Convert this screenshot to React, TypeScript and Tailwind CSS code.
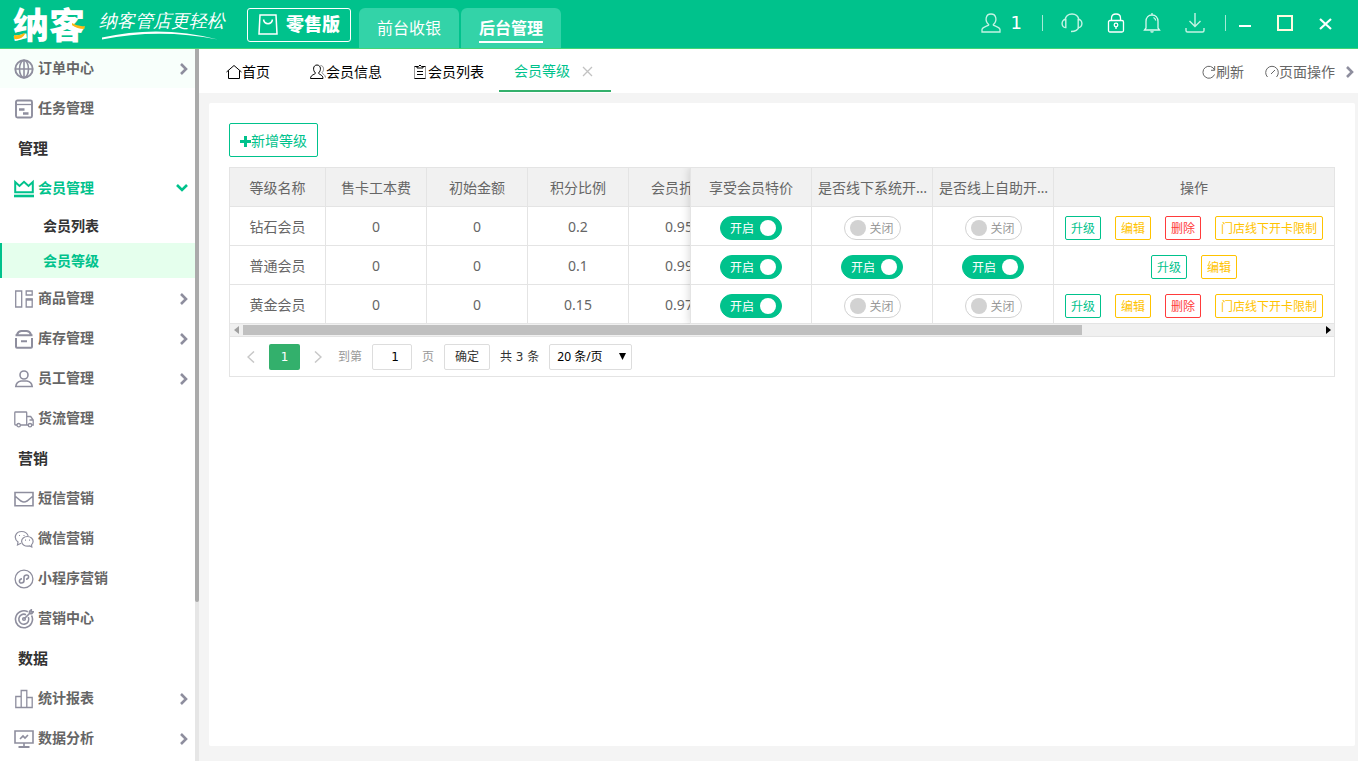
import { useState, type ReactNode } from "react";

type IconName =
  | "globe"
  | "task"
  | "crown"
  | "goods"
  | "stock"
  | "staff"
  | "truck"
  | "mail"
  | "wechat"
  | "mini"
  | "target"
  | "stats"
  | "monitor";

const iconPaths: Record<IconName, ReactNode> = {
  globe: (
    <>
      <circle cx="10" cy="10" r="8.7" strokeWidth="1.9" />
      <ellipse cx="10" cy="10" rx="4.5" ry="8.7" />
      <path d="M1.5 10h17M10 1.5v17" />
    </>
  ),
  task: (
    <>
      <rect x="2" y="1.5" width="16" height="17" rx="1.5" strokeWidth="1.9" />
      <path d="M2 5.500h16" strokeWidth="1.300" />
      <path d="M5 10.500h5.500M9 14.500h5.500" strokeWidth="2.400" />
    </>
  ),
  crown: (
    <>
      <path d="M1.200 3v10.200h17.600V3l-4.300 4L10 2.800 5.500 7z" strokeWidth="2" />
      <path d="M0 17h20" strokeWidth="2.6" />
    </>
  ),
  goods: (
    <>
      <path d="M1.700 2h6v16h-6zM12.200 2h6v4h-6zM12.200 10h6v8h-6z" strokeWidth="1.3" />
      <path d="M12 10.700h6.500" strokeWidth="2" />
    </>
  ),
  stock: (
    <path
      d="M1.500 6.200h17M3 5.500c1-2.500 2.500-3.500 4.500-3.500h5c2 0 3.500 1 4.500 3.500M2 9v8.700q0 1 1 1h14q1 0 1-1V9M7 12.300h6"
      strokeWidth="2"
    />
  ),
  staff: (
    <>
      <circle cx="10" cy="6" r="4" />
      <path d="M1.800 17.500c.4-3.300 2.700-5 5.200-5.500h6c2.500.5 4.800 2.200 5.200 5.500z" />
    </>
  ),
  truck: (
    <>
      <path
        d="M3 16H1.500q-.7 0-.7-.8V3.800q0-.8.700-.8H12q.7 0 .7.800V16H6.500M12.700 7.500h4l2.500 3.500v5h-1.400M12.700 16h1.500M15.500 11h3.700"
        strokeWidth="1.300"
      />
      <circle cx="4.700" cy="16.200" r="1.700" strokeWidth="1.300" />
      <circle cx="16" cy="16.200" r="1.700" strokeWidth="1.300" />
    </>
  ),
  mail: <path d="M1 3.500h18v13.300H1zM1.500 7.500 7 12q3 2 6 0l5.500-4.500" />,
  wechat: (
    <>
      <path d="M7 14.300 3.500 16l.5-3C-1 9 1.500 2.500 7.700 2.500c3.300 0 5.600 2 6.500 4.400M5 6.500h1M9.500 6.500h1" strokeWidth="1.200" />
      <path
        d="M13.300 7.500c3.400 0 5.800 2.200 5.800 4.800 0 1.500-.6 2.700-1.600 3.600l.3 2-2.200-1c-4.500 1-8-1.300-8-4.600 0-2.600 2.400-4.800 5.700-4.800zM11 11.200h1M15 11.200h1"
        strokeWidth="1.200"
      />
    </>
  ),
  mini: (
    <>
      <circle cx="10" cy="10" r="8.900" strokeWidth="1.300" />
      <path d="M8 9.800c-3.300.4-3.300 4.200-.7 4.200 1.600 0 2.700-.9 2.700-2.500V8.500C10 6.900 11.100 6 12.700 6c2.600 0 2.600 3.800-.7 4.200" />
    </>
  ),
  target: (
    <>
      <path d="M17.600 6.500A8.500 8.500 0 1 1 13.800 2.700" />
      <path d="M14.300 8A5 5 0 1 1 12 5.700" />
      <circle cx="10" cy="10" r="1.300" />
      <path d="m10.500 9.500 6-6M15.500 4.500V2.300L17.300.8v2h2l-1.500 1.800z" />
    </>
  ),
  stats: <path d="M1.800 7.500h5.400v11H1.800zM7.200 1.500h5.600v17H7.200zM12.800 8.500h5.400v10h-5.400z" strokeWidth="1.300" />,
  monitor: (
    <>
      <path d="M1 2h18v12H1zM10 14v4" />
      <path d="M4.500 18h11" strokeWidth="2" />
      <path d="m6 10 3-3 2 2 3-3" />
    </>
  ),
};

function NavIcon({ name }: { name: IconName }) {
  return (
    <svg className="size-5 shrink-0" viewBox="0 0 20 20" fill="none" stroke="currentColor" strokeWidth="1.6">
      {iconPaths[name]}
    </svg>
  );
}

function Chevron({ className }: { className?: string }) {
  return (
    <svg className={className} width="8" height="12" viewBox="0 0 8 12" fill="none" stroke="currentColor" strokeWidth="2.6">
      <path d="m1 1 5 5-5 5" />
    </svg>
  );
}

type NavItem = {
  label: string;
  icon?: IconName;
  arrow?: boolean;
  hover?: boolean;
  children?: string[];
};

const navItems: NavItem[] = [
  { label: "订单中心", icon: "globe", arrow: true, hover: true },
  { label: "任务管理", icon: "task" },
  { label: "管理" },
  { label: "会员管理", icon: "crown", children: ["会员列表", "会员等级"] },
  { label: "商品管理", icon: "goods", arrow: true },
  { label: "库存管理", icon: "stock", arrow: true },
  { label: "员工管理", icon: "staff", arrow: true },
  { label: "货流管理", icon: "truck" },
  { label: "营销" },
  { label: "短信营销", icon: "mail" },
  { label: "微信营销", icon: "wechat" },
  { label: "小程序营销", icon: "mini" },
  { label: "营销中心", icon: "target" },
  { label: "数据" },
  { label: "统计报表", icon: "stats", arrow: true },
  { label: "数据分析", icon: "monitor", arrow: true },
];

const levels = [
  { name: "钻石会员", fee: "0", initial: "0", ratio: "0.2", discount: "0.95", special: true, offline: false, online: false, full: true },
  { name: "普通会员", fee: "0", initial: "0", ratio: "0.1", discount: "0.99", special: true, offline: true, online: true, full: false },
  { name: "黄金会员", fee: "0", initial: "0", ratio: "0.15", discount: "0.97", special: true, offline: false, online: false, full: true },
];

function Header() {
  return (
    <header className="relative z-10 flex h-12 shrink-0 items-start bg-[#00c28c] text-white shadow-[0_1px_0_#44d477]">
      <div className="relative ml-[13px] h-12 w-[74px]">
        <span className="text-4xl leading-[52px] font-black whitespace-nowrap">纳客</span>
        <svg className="absolute inset-0" width="74" height="48" viewBox="0 0 74 48" fill="#fdb913">
          <path d="M1 35q6 1 10-2l1 1q-3 6-11 5zM59 23q6 4 13 3l-1 3q-7 0-12-4z" />
        </svg>
      </div>
      <div className="relative ml-3 h-12 w-[128px]">
        <span className="font-serif text-lg leading-[44px] whitespace-nowrap italic">纳客管店更轻松</span>
        <svg className="absolute inset-0" width="128" height="48" viewBox="0 0 128 48" fill="white">
          <path d="M3 37.500q58-13 116 2Q60 28 3 39.500z" />
        </svg>
      </div>
      <button className="mt-2 ml-5 flex h-[34px] w-[104px] items-center justify-center gap-2 rounded-[3px] border border-white pb-0.5 text-lg leading-6 font-black">
        <svg width="20" height="21" viewBox="0 0 20 21" fill="none" stroke="white" strokeWidth="1.500">
          <path d="M2 1h16l1 19H1zM5.500 5.500c1 5.500 8 5.500 9 0" />
        </svg>
        零售版
      </button>
      <nav className="mt-2 ml-2 flex gap-0.5">
        <a href="#cashier" className="h-10 w-[100px] rounded-t-md bg-[#33d3a8] pt-2 text-center text-base leading-6">
          前台收银
        </a>
        <a href="#admin" className="flex h-10 w-[100px] justify-center rounded-t-md bg-[#33d3a8] pt-2">
          <span className="h-[27px] border-b-2 border-white text-base leading-6 font-bold">后台管理</span>
        </a>
      </nav>
      <div className="mt-3 ml-auto flex h-[22px] items-center pr-[26px]">
        <button aria-label="用户" className="flex items-center gap-2.5 font-['DejaVu_Sans'] text-lg">
          <svg width="20" height="20" viewBox="0 0 20 20" fill="none" stroke="#c4f3e4" strokeWidth="1.300">
            <path d="M7.700 11.500C3.500 8 4.500 1 10 1s6.500 7 2.300 10.500c-.8 1.500 6.200 2 6.700 5V19H1v-2.500c.5-3 7.500-3.500 6.700-5z" />
          </svg>
          1
        </button>
        <span className="ml-5 h-4 w-px bg-[#a5ead6]" />
        <button aria-label="客服" className="ml-[18px]">
          <svg width="22" height="20" viewBox="0 0 22 20" fill="none" stroke="#c4f3e4" strokeWidth="1.400">
            <path d="M4 7c1.500-8 12.500-8 14 0M18 14c-1 3-4 4.500-8 4.500" />
            <path d="M4.800 6.500v8C-.3 15 .0 6 4.800 6.500zM17.200 6.500v8c5.100.5 4.800-8.500 0-8z" />
          </svg>
        </button>
        <button aria-label="锁屏" className="ml-6">
          <svg width="18" height="20" viewBox="0 0 18 20" fill="none" stroke="white" strokeWidth="1.300">
            <rect x="1.500" y="7.500" width="15" height="11.500" rx="1.500" />
            <path d="M4.500 7.500V5q0-4 4.500-4t4.500 4v2.500M9 13.500v2.500" />
            <circle cx="9" cy="12" r="1.800" />
          </svg>
        </button>
        <button aria-label="通知" className="ml-[18px]">
          <svg width="18" height="20" viewBox="0 0 18 20" fill="none" stroke="#d8f7ee" strokeWidth="1.300">
            <path d="M3 15V8.500C3 4.500 5.500 2 9 2s6 2.500 6 6.500V15l1.500 2h-15zM9 0v2M7.500 18.500q1.500 1 3 0M10.500 4.500q2 1 2.200 3" />
          </svg>
        </button>
        <button aria-label="下载" className="ml-6">
          <svg width="20" height="20" viewBox="0 0 20 20" fill="none" stroke="#c4f3e4" strokeWidth="1.400">
            <path d="M10 0v13M4.500 8l5.500 5.500L15.500 8M1 15v2.500q0 1.500 1.500 1.500h15q1.500 0 1.500-1.500V15" />
          </svg>
        </button>
        <span className="ml-5 h-4 w-px bg-[#a5ead6]" />
        <button aria-label="最小化" className="ml-[13px]">
          <svg width="12" height="14" viewBox="0 0 12 14" fill="none" stroke="white" strokeWidth="2">
            <path d="M0 10h12" />
          </svg>
        </button>
        <button aria-label="最大化" className="ml-[26px]">
          <svg width="16" height="16" viewBox="0 0 16 16" fill="none" stroke="#fffbe0" strokeWidth="2">
            <rect x="1" y="1" width="14" height="14" />
          </svg>
        </button>
        <button aria-label="关闭窗口" className="ml-[26px]">
          <svg width="13" height="13" viewBox="0 0 13 13" fill="none" stroke="white" strokeWidth="2.200">
            <path d="m1 2 11 10M12 2 1 12" />
          </svg>
        </button>
      </div>
    </header>
  );
}

function Sidebar() {
  return (
    <aside className="flex w-[199px] shrink-0 overflow-hidden bg-white">
      <nav className="min-w-0 flex-1 text-sm font-bold text-[#666]">
        {navItems.map((item) => {
          if (!item.icon) {
            return (
              <h2 key={item.label} className="h-10 pl-[18px] text-[15px] leading-10 font-bold text-[#333]">
                {item.label}
              </h2>
            );
          }
          return (
            <div key={item.label}>
              <a
                href="#nav"
                className={`flex h-10 items-center gap-1 pr-[7px] pl-3.5 ${item.hover ? "bg-[#f8fffb]" : ""} ${
                  item.children ? "text-[#00c28c]" : ""
                }`}
              >
                <span className={`pt-0.5 ${item.children ? "" : "text-[#8e8e9e]"}`}>
                  <NavIcon name={item.icon} />
                </span>
                <span>{item.label}</span>
                {item.arrow && <Chevron className="mt-0.5 ml-auto text-[#8e8e9e]" />}
                {item.children && <Chevron className="mr-0.5 ml-auto rotate-90" />}
              </a>
              {item.children?.map((child) => {
                const active = child === "会员等级";
                return (
                  <a
                    key={child}
                    href="#nav"
                    className={`block h-[35px] border-l-2 pl-[41px] leading-[35px] ${
                      active ? "border-[#00c28c] bg-[#e5ffed] text-[#00c28c]" : "border-transparent text-[#333]"
                    }`}
                  >
                    {child}
                  </a>
                );
              })}
            </div>
          );
        })}
      </nav>
      <div className="w-1 bg-[#e6e6e6]">
        <div className="h-[554px] rounded-b-sm bg-[#aaa]" />
      </div>
    </aside>
  );
}

function TabBar() {
  return (
    <div className="flex h-[45px] shrink-0 items-stretch bg-white pl-3 text-sm text-black">
      <a href="#home" className="mr-2.5 flex items-center px-[15px] pt-0.5">
        <svg width="16" height="16" viewBox="0 0 16 16" fill="none" stroke="currentColor">
          <path d="M.5 8 8 1.500 15.500 8M2.500 6.500v8h11v-8" />
        </svg>
        首页
      </a>
      <a href="#info" className="flex items-center px-[15px] pt-0.5">
        <svg width="16" height="16" viewBox="0 0 16 16" fill="none" stroke="currentColor">
          <path d="M5.500 9C2.500 6.500 3 1 7 1s4.500 5.500 1.500 8c0 1.500 4.500 1.500 4.500 5.500H.5C.5 10.500 5.500 10.500 5.500 9z" />
          <path d="M10.500 1.500c3.500 0 4 5 1.500 7 0 1.500 3.500 2 3.500 5" stroke="#888" />
        </svg>
        会员信息
      </a>
      <a href="#list" className="flex items-center px-[15px] pt-0.5">
        <svg width="16" height="16" viewBox="0 0 16 16" fill="none" stroke="currentColor">
          <path d="M2.500 2.500v12M13.500 2.500v12" stroke="#999" />
          <path d="M5 2.500H2.500M11 2.500h2.500M2.500 14.500h11M5 4V2.500h1.500L8 1l1.500 1.500H11V4zM5 7.500h6M5 10.500h6" />
        </svg>
        会员列表
      </a>
      <div className="flex h-11 items-center gap-3 border-b-2 border-[#33b06c] pt-1 pr-[18px] pl-[15px] text-[#00c28c]">
        <a href="#level">会员等级</a>
        <button aria-label="关闭标签">
          <svg width="11" height="11" viewBox="0 0 11 11" fill="none" stroke="#c2c2c2" strokeWidth="1.300">
            <path d="m1 1 9 9M10 1l-9 9" />
          </svg>
        </button>
      </div>
      <div className="ml-auto flex items-center pt-0.5 pr-1 text-[#666]">
        <button className="flex items-center">
          <svg width="14" height="14" viewBox="0 0 14 14" fill="none" stroke="currentColor">
            <path d="M12.500 5A6 6 0 1 0 12.500 9.500M12.700 1v4.300H9" />
          </svg>
          刷新
        </button>
        <button className="ml-[21px] flex items-center">
          <svg width="14" height="14" viewBox="0 0 14 14" fill="none" stroke="currentColor">
            <path d="M2.500 12A6.300 6.300 0 1 1 11.500 12M6 9l4-4" />
          </svg>
          页面操作
        </button>
        <Chevron className="ml-[11px] text-[#8e8e9e]" />
      </div>
    </div>
  );
}

function Toggle({ label, initial }: { label: string; initial: boolean }) {
  const [on, setOn] = useState(initial);
  return (
    <label
      className={`relative mt-0.5 inline-flex h-6 items-center rounded-full border align-middle text-xs ${
        on
          ? "w-[62px] gap-1.5 border-[#00c28c] bg-[#00c28c] pl-[9px] text-white"
          : "w-[57px] gap-1 border-[#d2d2d2] bg-white pl-[5px] text-[#999]"
      }`}
    >
      <input
        type="checkbox"
        aria-label={label}
        className="sr-only"
        checked={on}
        onChange={(e) => setOn(e.target.checked)}
      />
      {on && <span className="pt-0.5">开启</span>}
      <span className={`size-4 rounded-full ${on ? "bg-white" : "bg-[#d2d2d2]"}`} />
      {!on && <span className="pt-0.5">关闭</span>}
    </label>
  );
}

const tone = {
  green: "border-[#00c28c] text-[#00c28c]",
  yellow: "border-[#ffc300] text-[#ffc300]",
  red: "border-[#ff3b3b] text-[#ff3b3b]",
};

function ActionButton({ color, children }: { color: keyof typeof tone; children: ReactNode }) {
  return (
    <button className={`h-6 rounded-xs border px-[5px] pt-px text-xs leading-[21px] whitespace-nowrap ${tone[color]}`}>
      {children}
    </button>
  );
}

const th = "h-[39px] border-r border-b border-[#e4e4e4] pt-0.5 pb-0 font-normal";
const td = "h-[39px] border-r border-b border-[#e4e4e4] px-0 pt-0.5 pb-0 text-center";

function LevelTable() {
  return (
    <div className="mt-2.5 border border-[#e4e4e4] text-sm text-[#666]">
      <div className="flex">
        <div className="min-w-0 flex-1 overflow-hidden">
          <table className="w-[500px] table-fixed border-separate border-spacing-0">
            <thead className="bg-[#f1f1f1]">
              <tr>
                <th className={`${th} w-24 px-0`}>等级名称</th>
                <th className={`${th} px-0`}>售卡工本费</th>
                <th className={`${th} px-0`}>初始金额</th>
                <th className={`${th} px-0`}>积分比例</th>
                <th className={`${th} px-0`}>会员折扣</th>
              </tr>
            </thead>
            <tbody>
              {levels.map((l) => (
                <tr key={l.name}>
                  <td className={td}>{l.name}</td>
                  <td className={td}>{l.fee}</td>
                  <td className={td}>{l.initial}</td>
                  <td className={td}>{l.ratio}</td>
                  <td className={td}>{l.discount}</td>
                </tr>
              ))}
            </tbody>
          </table>
        </div>
        {/* fixed right columns */}
        <table className="relative w-[644px] shrink-0 table-fixed border-separate border-spacing-0 border-l border-[#e4e4e4] bg-white shadow-[-1px_0_8px_rgba(0,0,0,0.15)] [clip-path:inset(0_0_0_-10px)]">
          <thead className="bg-[#f1f1f1]">
            <tr>
              <th className={`${th} w-[121px] px-0`}>享受会员特价</th>
              <th className={`${th} w-[121px] truncate pr-1 pl-1.5 text-left`}>是否线下系统开卡</th>
              <th className={`${th} w-[121px] truncate pr-1 pl-1.5 text-left`}>是否线上自助开卡</th>
              <th className={`${th} border-r-0 px-0`}>操作</th>
            </tr>
          </thead>
          <tbody>
            {levels.map((l) => (
              <tr key={l.name}>
                <td className={td}>
                  <Toggle label={`${l.name} 享受会员特价`} initial={l.special} />
                </td>
                <td className={td}>
                  <Toggle label={`${l.name} 线下系统开卡`} initial={l.offline} />
                </td>
                <td className={td}>
                  <Toggle label={`${l.name} 线上自助开卡`} initial={l.online} />
                </td>
                <td className={`${td} border-r-0`}>
                  <div className="mt-0.5 flex justify-center gap-3.5">
                    <ActionButton color="green">升级</ActionButton>
                    <ActionButton color="yellow">编辑</ActionButton>
                    {l.full && <ActionButton color="red">删除</ActionButton>}
                    {l.full && <ActionButton color="yellow">门店线下开卡限制</ActionButton>}
                  </div>
                </td>
              </tr>
            ))}
          </tbody>
        </table>
      </div>

      <div className="flex h-[13px] items-center justify-between border-b border-[#e4e4e4] bg-[#f0f0f0] pr-[3px] pl-1">
        <svg width="5" height="8" viewBox="0 0 5 8" fill="#a0a0a0">
          <path d="M5 0v8L0 4z" />
        </svg>
        <div className="mr-2 ml-1 flex-1">
          <div className="h-2.5 w-[78%] bg-[#c0c0c0]" />
        </div>
        <svg width="5" height="8" viewBox="0 0 5 8" fill="black">
          <path d="M0 0v8l5-4z" />
        </svg>
      </div>

      <div className="flex h-[39px] items-center gap-2.5 pl-[17px] text-xs text-[#333]">
        <button aria-label="上一页" className="mr-1">
          <svg width="8" height="12" viewBox="0 0 8 12" fill="none" stroke="#c8c8c8" strokeWidth="1.500">
            <path d="M7 .5 1 6l6 5.500" />
          </svg>
        </button>
        <button className="h-[26px] w-[31px] rounded-xs bg-[#33b06c] font-['DejaVu_Sans'] text-white">1</button>
        <button aria-label="下一页" className="mx-1">
          <svg width="8" height="12" viewBox="0 0 8 12" fill="none" stroke="#c8c8c8" strokeWidth="1.500">
            <path d="m1 .5 6 5.500-6 5.500" />
          </svg>
        </button>
        <label htmlFor="page" className="ml-0.5 text-[#999]">到第</label>
        <input
          id="page"
          defaultValue="1"
          className="h-[26px] w-10 rounded-xs border border-[#ddd] pl-1.5 text-center font-['DejaVu_Sans'] text-black"
        />
        <span className="text-[#999]">页</span>
        <button className="h-[26px] w-[46px] rounded-xs border border-[#ddd] pt-px">确定</button>
        <span className="font-['DejaVu_Sans','Noto_Sans_CJK_SC',sans-serif]">共 3 条</span>
        <div className="relative">
          <select
            aria-label="每页条数"
            className="h-[26px] w-[83px] appearance-none rounded-xs border border-[#ddd] bg-white px-[7px] pt-px text-black"
          >
            <option>20 条/页</option>
            <option>50 条/页</option>
          </select>
          <svg className="pointer-events-none absolute top-[9px] right-1.5" width="7" height="7" viewBox="0 0 7 7">
            <path d="M0 0h7L3.500 7z" />
          </svg>
        </div>
      </div>
    </div>
  );
}

export default function App() {
  return (
    <div className="flex h-screen flex-col bg-[#f4f4f4] font-['Noto_Sans','Noto_Sans_CJK_SC',sans-serif]">
      <Header />
      <div className="flex min-h-0 flex-1">
        <Sidebar />
        <div className="flex min-w-0 flex-1 flex-col">
          <TabBar />
          <main className="mt-2.5 mr-[3px] mb-[15px] ml-2.5 flex-1 rounded-xs bg-white p-5">
            <button className="flex h-[34px] items-center rounded-xs border border-[#00c28c] px-2.5 pt-0.5 text-sm text-[#00c28c]">
              <svg width="11" height="11" viewBox="0 0 11 11" fill="currentColor">
                <path d="M4 0h3v4h4v3H7v4H4V7H0V4h4z" />
              </svg>
              新增等级
            </button>
            <LevelTable />
          </main>
        </div>
      </div>
    </div>
  );
}
